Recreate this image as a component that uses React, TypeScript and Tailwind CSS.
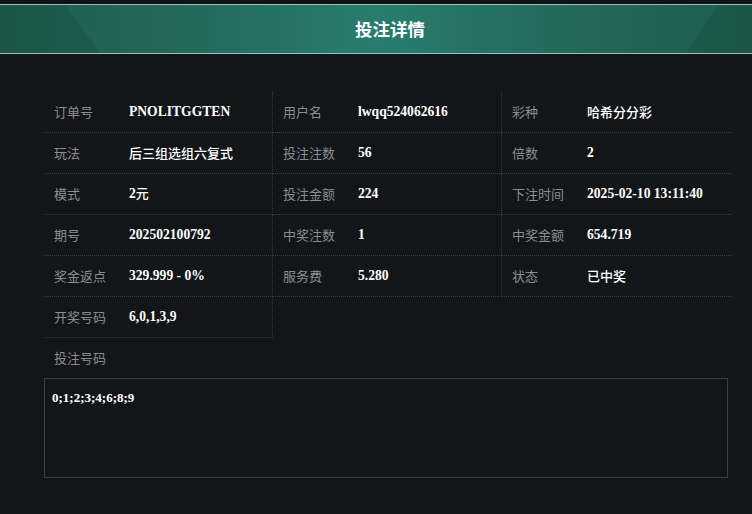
import React from "react";

const rows: [string, string][][] = [
  [["订单号", "PNOLITGGTEN"], ["用户名", "lwqq524062616"], ["彩种", "哈希分分彩"]],
  [["玩法", "后三组选组六复式"], ["投注注数", "56"], ["倍数", "2"]],
  [["模式", "2元"], ["投注金额", "224"], ["下注时间", "2025-02-10 13:11:40"]],
  [["期号", "202502100792"], ["中奖注数", "1"], ["中奖金额", "654.719"]],
  [["奖金返点", "329.999 - 0%"], ["服务费", "5.280"], ["状态", "已中奖"]],
];

const labelCls =
  "w-[85px] shrink-0 pl-[10px] text-[13px] text-[#8a8d90] font-['Noto_Sans_CJK_SC',sans-serif]";

function Value({ value }: { value: string }) {
  const parts = value.split(/([\u4e00-\u9fff]+)/).filter((p) => p.length > 0);
  return (
    <div className="flex items-baseline text-white">
      {parts.map((p, i) =>
        /[\u4e00-\u9fff]/.test(p) ? (
          <span key={i} className="text-[13px] font-medium font-['Noto_Sans_CJK_SC',sans-serif]">
            {p}
          </span>
        ) : (
          <span key={i} className="text-[13.6px] font-bold font-['Liberation_Serif',serif] whitespace-pre">
            {p}
          </span>
        )
      )}
    </div>
  );
}

function Cell({ label, value, right }: { label: string; value: string; right: boolean }) {
  return (
    <div
      className={`flex h-[41px] items-center border-b border-dotted border-[#3a3d41] ${
        right ? "border-r" : ""
      }`}
    >
      <div className={labelCls}>{label}</div>
      <Value value={value} />
    </div>
  );
}

export default function App() {
  return (
    <div className="w-[752px] h-[514px] bg-[#131619] overflow-hidden font-['Noto_Sans_CJK_SC',sans-serif]">
      <div className="h-[4px] bg-[#101216]" />
      <div className="relative h-[50px] border-y border-[#9cc2b9] bg-[linear-gradient(90deg,#1f5c51_0%,#23695c_25%,#287d6f_50%,#23695c_75%,#1f5c51_100%)] flex items-center justify-center pl-[28px]">
        <svg className="absolute left-0 top-0" width="752" height="48" viewBox="0 0 752 48">
          <polygon points="0,0 65,0 100,48 0,48" fill="#174a40" opacity="0.35" />
          <polygon points="718,0 752,0 752,48 686,48" fill="#174a40" opacity="0.35" />
        </svg>
        <span className="relative text-[17.5px] font-bold text-white">投注详情</span>
      </div>
      <div className="pl-[44px] pt-[38px]">
        <div className="grid w-[687px] grid-cols-3">
          {rows.map((r, i) =>
            r.map((c, j) => (
              <Cell key={`${i}-${j}`} label={c[0]} value={c[1]} right={j < 2} />
            ))
          )}
          <Cell label="开奖号码" value="6,0,1,3,9" right={true} />
        </div>
        <div className="flex h-[40px] items-center">
          <div className={labelCls}>投注号码</div>
        </div>
        <div className="w-[684px] h-[100px] border border-[#3a3d41] px-[7px] pt-[9px]">
          <div className="text-[13px] font-bold text-white font-['Liberation_Serif',serif]">
            0;1;2;3;4;6;8;9
          </div>
        </div>
      </div>
    </div>
  );
}
